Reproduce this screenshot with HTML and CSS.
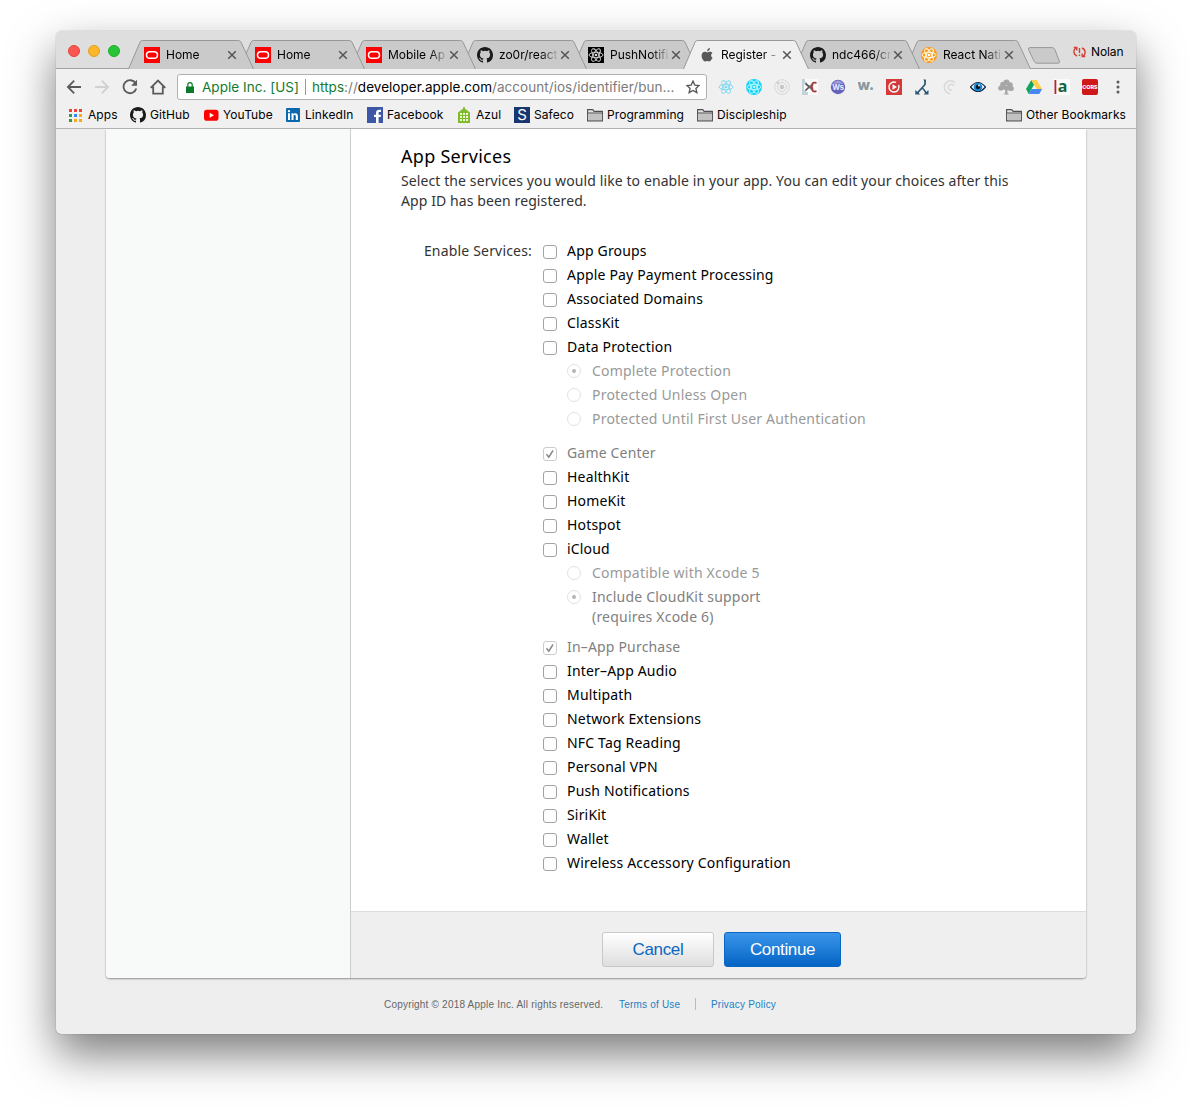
FILE: index.html
```html
<!DOCTYPE html>
<html lang="en">
<head>
<meta charset="utf-8">
<title>Register - iOS App IDs</title>
<link rel="stylesheet" href="styles.css">
</head>
<body>
<svg class="defs" aria-hidden="true">
  <symbol id="tab" viewBox="0 0 126 29"><path d="M.5 29 12 2.200Q12.800.5 14.500.5H110.500Q112.200.5 113 2.200L125.500 29"/></symbol>
  <symbol id="close" viewBox="0 0 10 10"><path d="M1.200 1.200 8.800 8.800M8.800 1.200 1.200 8.800" stroke="#555" stroke-width="1.500"/></symbol>
  <symbol id="oracle" viewBox="0 0 16 16"><path fill="#f00" d="M0 0h16v16H0z"/><rect x="2.500" y="4.700" width="11" height="6.600" rx="3.300" fill="none" stroke="#fff" stroke-width="1.500"/></symbol>
  <symbol id="github" viewBox="0 0 16 16"><path fill="#1b1b1b" d="M8 0C3.580 0 0 3.580 0 8c0 3.540 2.290 6.530 5.470 7.590.4.070.55-.17.55-.38 0-.19-.01-.82-.01-1.490-2.010.37-2.530-.49-2.690-.94-.09-.23-.48-.94-.82-1.130-.28-.15-.68-.52-.01-.53.63-.01 1.080.58 1.230.82.72 1.210 1.870.87 2.330.66.070-.52.28-.87.51-1.070-1.780-.2-3.640-.89-3.640-3.950 0-.87.31-1.590.82-2.150-.08-.2-.36-1.020.08-2.120 0 0 .67-.21 2.200.82a7.600 7.600 0 0 1 4 0c1.530-1.040 2.200-.82 2.200-.82.44 1.100.16 1.920.08 2.120.51.56.82 1.270.82 2.150 0 3.070-1.870 3.750-3.650 3.950.29.25.54.73.54 1.480 0 1.070-.01 1.930-.01 2.200 0 .21.15.46.55.38A8.010 8.010 0 0 0 16 8c0-4.420-3.580-8-8-8z"/></symbol>
  <symbol id="atom" viewBox="0 0 16 16"><g fill="none" stroke="currentColor" stroke-width=".9"><ellipse cx="8" cy="8" rx="7" ry="2.700"/><ellipse cx="8" cy="8" rx="7" ry="2.700" transform="rotate(60 8 8)"/><ellipse cx="8" cy="8" rx="7" ry="2.700" transform="rotate(120 8 8)"/></g><circle cx="8" cy="8" r="1.300" fill="currentColor"/></symbol>
  <symbol id="folder" viewBox="0 0 16 14"><path d="M.6 12.900V1.600h5.200l1.300 1.800h8.300v9.500H.6z" fill="#e4e4e4" stroke="#505050" stroke-width="1.100"/><path d="M1.500 5.500h13.200v6.700H1.500z" fill="#c2c2c2"/><path d="M.6 5h14.800" stroke="#505050"/></symbol>
</svg>

<div class="window">
  <header class="chrome">
    <div class="tabstrip">
      <div class="lights"><i class="red"></i><i class="yellow"></i><i class="green"></i></div>
      <div class="tabs">
        <div class="tab t1"><svg class="shape"><use href="#tab"/></svg><div class="tab-in"><svg class="fav"><use href="#oracle"/></svg><span class="title">Home</span><svg class="x"><use href="#close"/></svg></div></div>
        <div class="tab t2"><svg class="shape"><use href="#tab"/></svg><div class="tab-in"><svg class="fav"><use href="#oracle"/></svg><span class="title">Home</span><svg class="x"><use href="#close"/></svg></div></div>
        <div class="tab t3"><svg class="shape"><use href="#tab"/></svg><div class="tab-in"><svg class="fav"><use href="#oracle"/></svg><span class="title">Mobile Ap</span><svg class="x"><use href="#close"/></svg></div></div>
        <div class="tab t4"><svg class="shape"><use href="#tab"/></svg><div class="tab-in"><svg class="fav"><use href="#github"/></svg><span class="title">zo0r/react</span><svg class="x"><use href="#close"/></svg></div></div>
        <div class="tab t5"><svg class="shape"><use href="#tab"/></svg><div class="tab-in"><svg class="fav dark"><use href="#atom"/></svg><span class="title">PushNotifi</span><svg class="x"><use href="#close"/></svg></div></div>
        <div class="tab active"><svg class="shape"><use href="#tab"/></svg><div class="tab-in"><svg class="fav" viewBox="0 0 16 16"><path fill="#585858" d="M10.900 1c.1 1.700-1.300 3.200-2.700 3.200C8 2.700 9.400 1.200 10.900 1zM13 11.600c-.7 1.500-1.600 2.800-2.600 2.800-.9 0-1.100-.5-2.100-.5s-1.400.5-2.200.5c-1.600 0-3.500-3.100-3.500-5.700 0-2.500 1.600-3.900 3.200-3.900 1.100 0 1.800.6 2.500.6.7 0 1.600-.7 2.900-.6.700 0 1.700.4 2.300 1.300-2 1.200-1.700 4.300.5 5z"/></svg><span class="title">Register -</span><svg class="x"><use href="#close"/></svg></div></div>
        <div class="tab t7"><svg class="shape"><use href="#tab"/></svg><div class="tab-in"><svg class="fav"><use href="#github"/></svg><span class="title">ndc466/cr</span><svg class="x"><use href="#close"/></svg></div></div>
        <div class="tab t8"><svg class="shape"><use href="#tab"/></svg><div class="tab-in"><svg class="fav orange"><use href="#atom"/></svg><span class="title">React Nati</span><svg class="x"><use href="#close"/></svg></div></div>
      </div>
      <svg class="newtab" viewBox="0 0 34 17"><path d="M3 .6h22q2 0 2.800 1.800l4.600 11.800q.7 2-1.200 2H10q-2 0-2.800-1.800L1.500 2.600Q.9.6 3 .6z" fill="#cacaca" stroke="#989898"/></svg>
      <div class="profile"><svg width="13" height="12" viewBox="0 0 13 12"><g fill="none" stroke="#d23f31" stroke-width="1.400"><path d="M4 10C0 8.500.2 3.500 2.800 2M.8 1.500h3v3M9 2c4 1.500 3.800 6.500 1.200 8M12.200 10.500h-3v-3M6.500 2v5M6.500 8.500V10"/></g></svg><span>Nolan</span></div>
    </div>

    <div class="toolbar">
      <div class="nav">
        <svg viewBox="0 0 16 16"><path d="M15 8H2M8.200 1.700 1.900 8l6.300 6.300" stroke="#5a5a5a"/></svg>
        <svg viewBox="0 0 16 16"><path d="M1 8h13M7.800 1.700 14.100 8l-6.300 6.300" stroke="#d0d0d0"/></svg>
        <svg viewBox="0 0 16 16"><path d="M13.600 4.300A6.500 6.500 0 1 0 14.300 9.500" stroke="#5a5a5a"/><path d="M15 .8v5.900H9.100z" fill="#5a5a5a" stroke="none"/></svg>
        <svg viewBox="0 0 16 16"><path d="M.7 8.800 8 1.500l7.300 7.300M3.200 7.500v7.200h9.600V7.500" stroke="#5a5a5a"/></svg>
      </div>
      <div class="omnibox">
        <svg class="lock" viewBox="0 0 8 11"><path fill="#0b7a2b" d="M0 4.500h8V11H0z"/><path d="M1.800 5V2.800a2.200 2.200 0 0 1 4.400 0V5" fill="none" stroke="#0b7a2b" stroke-width="1.200"/></svg>
        <span class="org">Apple Inc. [US]</span><i class="sep"></i><span class="url"><b>https</b>://<em>developer.apple.com</em>/account/ios/identifier/bun...</span>
        <svg class="star" viewBox="0 0 14 14"><path d="m7 1.100 1.800 4 4.300.4-3.200 2.900 1 4.200L7 10.400l-3.900 2.200 1-4.200L.9 5.500l4.300-.4z" fill="none" stroke="#555" stroke-width="1.300"/></svg>
      </div>
      <div class="extensions">
        <svg viewBox="0 0 16 16" color="#79d7f2"><use href="#atom"/></svg>
        <svg viewBox="0 0 16 16" color="#c8f8ff"><circle cx="8" cy="8" r="8" fill="#12d4f5"/><use href="#atom"/></svg>
        <svg viewBox="0 0 16 16"><g fill="none" stroke="#d6d6d6"><circle cx="8" cy="8" r="7.300"/><circle cx="8" cy="8" r="4.500"/></g><circle cx="8" cy="8" r="2.300" fill="#c8c8c8"/><circle cx="3.800" cy="3.800" r="1.300" fill="#ccc"/></svg>
        <svg viewBox="0 0 16 16"><path fill="#fafafa" d="M2 0h14v16H2z"/><path fill="#c3d2da" d="M0 0h3v3h2v2H2v6h2v2h2v3H0z"/><path d="m3.500 4.500 3.800 3.300-3.800 3.700" fill="none" stroke="#555" stroke-width="1.700"/><path d="m7.200 7.800 3-2.500M7.200 7.800l3 3" stroke="#777" stroke-width="1.700"/><path d="M14.500 3.800c-3-.6-4.500.2-4 2 .2 1-.2 1.600-1.500 2.200 1.300.6 1.700 1.200 1.500 2.200-.5 1.800 1 2.800 4 2" fill="none" stroke="#9a3c3c" stroke-width="1.800"/></svg>
        <svg viewBox="0 0 16 16"><circle cx="8" cy="8" r="7.200" fill="#6463bb"/><path d="M2.500 5.300Q8-2.500 13.500 5.300 8 3.500 2.500 5.300" fill="#9f9fdc"/><text x="8" y="10.800" text-anchor="middle" font-size="7.500" font-weight="700" fill="#eef">Ws</text></svg>
        <svg viewBox="0 0 16 16"><text x="-.5" y="10.800" font-size="14.500" font-weight="800" fill="#87989f">w.</text></svg>
        <svg viewBox="0 0 16 16"><path fill="#d53a3a" d="M0 0h16v16H0z"/><path d="M10 3.400a5 5 0 1 0 2.600 2.700" fill="none" stroke="#fff" stroke-width="1.400"/><path d="M6.500 5.200 11 8l-4.500 2.800z" fill="#fff"/></svg>
        <svg viewBox="0 0 16 16"><path d="M11 1v4.500Q8 9 3.500 13.800M7.800 8.500Q10.500 11 12 14" fill="none" stroke="#2c5873" stroke-width="1.700"/><path d="M9.300.5h2.500v3zM1.300 11l5 4.500H1.300zM14.500 11v4.500h-5z" fill="#2c5873"/></svg>
        <svg viewBox="0 0 16 16"><g fill="none" stroke="#d8d8d8" stroke-width="1.500"><path d="M13 3.500C9 0 3 2 2.300 8c0 4 3 6.500 6 6.700"/><path d="M11.800 7C10.500 4 6.500 5 6.300 8c0 2.500 2 3.500 4 3"/></g></svg>
        <svg viewBox="0 0 16 16"><path d="M.5 8Q8-1 15.500 8 8 17 .5 8z" fill="#f4faff" stroke="#14253c" stroke-width="1.200"/><circle cx="8" cy="8" r="4.300" fill="#1688d4"/><circle cx="8" cy="8" r="2.200" fill="#06121e"/><circle cx="9" cy="6.500" r=".9" fill="#fff"/></svg>
        <svg viewBox="0 0 16 16" fill="#a6a6a6"><circle cx="2.800" cy="9" r="2.600"/><circle cx="5" cy="5.500" r="2.800"/><circle cx="8.500" cy="3.500" r="3"/><circle cx="12" cy="6" r="2.800"/><circle cx="13.300" cy="9.500" r="2.500"/><path d="M3 7h10v4.500H9.200l.4 2.500 1.400 1.500H5.500L7 14l.2-3L3 10z"/></svg>
        <svg viewBox="0 0 16 16"><path fill="#11a45d" d="M5.300 1 0 10l2.700 5L8 5.700z"/><path fill="#ffcf48" d="M5.300 1h5.400L16 10h-5.300z"/><path fill="#4687f4" d="M5.500 10H16l-2.700 5H2.700z"/></svg>
        <svg viewBox="0 0 16 16"><path fill="#fafafa" d="M0 0h16v16H0z"/><path d="M1.400 1v14" stroke="#b3262c" stroke-width="1.800"/><text class="sans" x="3.800" y="13" font-size="16" font-weight="700" fill="#17653e">a</text></svg>
        <svg viewBox="0 0 16 16"><rect width="16" height="16" rx="2" fill="#d01818"/><text x="8" y="10.300" text-anchor="middle" font-size="5.400" font-weight="800" fill="#fff">CORS</text></svg>
        <svg viewBox="0 0 16 16" fill="#5a5a5a"><circle cx="8" cy="3" r="1.500"/><circle cx="8" cy="8" r="1.500"/><circle cx="8" cy="13" r="1.500"/></svg>
      </div>
    </div>

    <nav class="bookmarks">
      <a class="bm1"><svg viewBox="0 0 16 16"><path fill="#e9453a" d="M1 2h3v3H1zM6 2h3v3H6zM11 2h3v3h-3z"/><path fill="#2d9a50" d="M1 7h3v3H1zM1 12h3v3H1z"/><path fill="#4285f4" d="M6 7h3v3H6z"/><path fill="#f5ab15" d="M11 7h3v3h-3zM6 12h3v3H6zM11 12h3v3h-3z"/></svg><span>Apps</span></a>
      <a class="bm2"><svg><use href="#github"/></svg><span>GitHub</span></a>
      <a class="bm3"><svg viewBox="0 0 16 16"><rect x="1" y="2.700" width="14.500" height="11" rx="2.800" fill="#f00"/><path d="M6.700 5.700v5l4.300-2.500z" fill="#fff"/></svg><span>YouTube</span></a>
      <a class="bm4"><svg viewBox="0 0 16 16"><rect x="1" y="1" width="14" height="14" rx="1" fill="#0c68ae"/><path d="M3 6.300h2V13H3zM6.500 6.300h2V13h-2zM8.500 9c0-1.500 2.300-1.500 2.300.2V13h2.100V9c0-3.500-3.500-3.500-4.400-1.500z" fill="#fff"/><circle cx="4" cy="4.100" r="1.200" fill="#fff"/></svg><span>LinkedIn</span></a>
      <a class="bm5"><svg viewBox="0 0 16 16"><path fill="#3b57a5" d="M0 0h16v16H0z"/><path d="M9 16v-6H7V7.700h2V6c0-2.400 1.300-3.300 3.200-3.300H14V5h-1.200c-1 0-1.200.4-1.200 1.200v1.500H14l-.3 2.300h-2.100v6z" fill="#fff"/></svg><span>Facebook</span></a>
      <a class="bm6"><svg viewBox="0 0 16 16"><path fill="#80bc2a" d="M7.200 0h1.600v1.500L14 5.600V16H2V5.600l5.200-4.100z"/><path d="M4 6h2v2H4zm3 0h2v2H7zm3 0h2v2h-2zM4 9h2v2H4zm3 0h2v2H7zm3 0h2v2h-2zM4 12h2v2H4zm3 0h2v2H7zm3 0h2v2h-2z" fill="#e9f6d8"/></svg><span>Azul</span></a>
      <a class="bm7"><svg viewBox="0 0 16 16"><path fill="#18376f" d="M0 0h16v16H0z"/><text x="8" y="13.300" text-anchor="middle" font-size="15" fill="#fff">S</text></svg><span>Safeco</span></a>
      <a class="bm8"><svg><use href="#folder"/></svg><span>Programming</span></a>
      <a class="bm9"><svg><use href="#folder"/></svg><span>Discipleship</span></a>
      <a class="other"><svg><use href="#folder"/></svg><span>Other Bookmarks</span></a>
    </nav>
  </header>

  <div class="page">
    <div class="panel">
      <aside></aside>
      <main>
        <section class="services">
          <h2>App Services</h2>
          <p class="intro">Select the services you would like to enable in your app. You can edit your choices after this<br>App ID has been registered.</p>
          <div class="form">
            <div class="label">Enable Services:</div>
            <ul>
              <li><i class="box"></i><span>App Groups</span></li>
              <li><i class="box"></i><span>Apple Pay Payment Processing</span></li>
              <li><i class="box"></i><span>Associated Domains</span></li>
              <li><i class="box"></i><span>ClassKit</span></li>
              <li><i class="box"></i><span>Data Protection</span></li>
              <li class="sub"><i class="radio on"></i><span>Complete Protection</span></li>
              <li class="sub"><i class="radio"></i><span>Protected Unless Open</span></li>
              <li class="sub gap"><i class="radio"></i><span>Protected Until First User Authentication</span></li>
              <li class="off"><i class="box"><svg viewBox="0 0 12 12"><path d="m2.500 6.200 2.300 2.900L9 2.500"/></svg></i><span>Game Center</span></li>
              <li><i class="box"></i><span>HealthKit</span></li>
              <li><i class="box"></i><span>HomeKit</span></li>
              <li><i class="box"></i><span>Hotspot</span></li>
              <li><i class="box"></i><span>iCloud</span></li>
              <li class="sub"><i class="radio"></i><span>Compatible with Xcode 5</span></li>
              <li class="sub two"><i class="radio on"></i><span>Include CloudKit support<br>(requires Xcode 6)</span></li>
              <li class="off"><i class="box"><svg viewBox="0 0 12 12"><path d="m2.500 6.200 2.300 2.900L9 2.500"/></svg></i><span>In–App Purchase</span></li>
              <li><i class="box"></i><span>Inter–App Audio</span></li>
              <li><i class="box"></i><span>Multipath</span></li>
              <li><i class="box"></i><span>Network Extensions</span></li>
              <li><i class="box"></i><span>NFC Tag Reading</span></li>
              <li><i class="box"></i><span>Personal VPN</span></li>
              <li><i class="box"></i><span>Push Notifications</span></li>
              <li><i class="box"></i><span>SiriKit</span></li>
              <li><i class="box"></i><span>Wallet</span></li>
              <li><i class="box"></i><span>Wireless Accessory Configuration</span></li>
            </ul>
          </div>
        </section>
        <div class="actions"><button class="cancel">Cancel</button><button class="continue">Continue</button></div>
      </main>
    </div>
    <footer><span class="copy">Copyright © 2018 Apple Inc. All rights reserved.</span><a class="terms">Terms of Use</a><i></i><a class="privacy">Privacy Policy</a></footer>
  </div>
</div>
</body>
</html>
```
FILE: styles.css
```css
* { box-sizing: border-box; }
body { margin: 0; height: 1114px; padding: 31px 56px 80px; background: #fff; font-family: Inter, sans-serif; overflow: hidden; }
svg { display: block; flex: none; }
.defs { position: absolute; width: 0; height: 0; }
.window { width: 1080px; height: 1003px; border-radius: 6px 6px 5px 5px; background: #eee; display: flex; flex-direction: column; box-shadow: 0 0 1px rgba(0,0,0,.5), 0 20px 45px rgba(0,0,0,.52); }

/* tab strip */
.chrome { height: 98px; border-bottom: 1px solid #b4b4b4; background: #f0f0f0; border-radius: 6px 6px 0 0; font-size: 12px; }
.tabstrip { height: 38px; background: #dedede; border-bottom: 1px solid #a3a3a3; border-radius: 6px 6px 0 0; display: flex; align-items: flex-start; }
.lights { display: flex; gap: 8px; padding: 14px 0 0 12px; width: 72px; }
.lights i { width: 12px; height: 12px; border-radius: 50%; border: 1px solid; flex: none; }
.lights .red { background: #fc5650; border-color: #e0443e; }
.lights .yellow { background: #fdb52b; border-color: #dfa023; }
.lights .green { background: #27c536; border-color: #1dad2b; }
.tabs { display: flex; padding-top: 9px; }
.tab { width: 126px; height: 29px; margin-right: -15px; display: grid; position: relative; flex: none; }
.tab > * { grid-area: 1 / 1; }
.shape { width: 126px; height: 29px; fill: #cacaca; stroke: #989898; }
.t1 { z-index: 8; } .t2 { z-index: 7; } .t3 { z-index: 6; } .t4 { z-index: 5; } .t5 { z-index: 4; } .t7 { z-index: 3; } .t8 { z-index: 2; }
.active { z-index: 9; }
.active .shape { fill: #f0f0f0; }
.tab-in { display: flex; align-items: center; padding: 1px 0 0 16px; }
.fav { width: 16px; height: 16px; }
.dark { background: #000; color: #ddd; }
.orange { background: #f99d1c; border-radius: 50%; color: #fff; }
.title { width: 61px; margin-left: 6px; padding-bottom: 2px; white-space: nowrap; letter-spacing: -.02px; -webkit-mask-image: linear-gradient(90deg, #000 42px, transparent 60px); mask-image: linear-gradient(90deg, #000 42px, transparent 60px); }
.x { width: 10px; height: 10px; }
.newtab { width: 34px; height: 17px; margin: 16px 0 0 11px; }
.profile { margin: 13px 0 0 12px; display: flex; align-items: center; gap: 5px; line-height: 15px; letter-spacing: -.1px; }

/* toolbar */
.toolbar { height: 36px; display: flex; align-items: center; padding-left: 10px; }
.nav { display: flex; gap: 12px; width: 111px; }
.nav svg { width: 16px; height: 16px; fill: none; stroke-width: 1.800; }
.omnibox { width: 530px; height: 26px; background: #fff; border: 1px solid #b0b0b0; border-radius: 3px; display: flex; align-items: center; padding-left: 8px; font-size: 13.500px; letter-spacing: .04px; white-space: nowrap; }
.lock { width: 8px; height: 11px; }
.org { color: #127a30; margin-left: 8px; width: 103px; }
.sep { width: 1px; height: 16px; background: #999; }
.url { color: #7b7b7b; width: 380px; padding-left: 6px; }
.url b { font-weight: 400; color: #127a30; }
.url em { font-style: normal; color: #000; }
.star { width: 14px; height: 14px; }
.extensions { display: flex; gap: 12px; margin-left: 11px; }
.extensions svg { width: 16px; height: 16px; }
.sans { font-family: "Noto Sans", sans-serif; }

/* bookmarks */
.bookmarks { display: flex; height: 20px; padding-left: 12px; letter-spacing: .08px; }
.bookmarks a { display: flex; align-items: center; gap: 4px; white-space: nowrap; }
.bookmarks svg { width: 16px; height: 16px; }
.bookmarks span { padding-bottom: 2px; }
.bm1 { width: 62px; } .bm2 { width: 73px; } .bm3 { width: 82px; } .bm4 { width: 82px; } .bm5 { width: 89px; } .bm6 { width: 58px; } .bm7 { width: 73px; } .bm8 { width: 110px; } .bm9 { width: 309px; }

/* page */
.page { flex: 1; padding: 0 50px; }
.panel { height: 849px; display: flex; background: #fff; border-radius: 0 0 4px 4px; box-shadow: 0 1px 2px rgba(0,0,0,.4); overflow: hidden; }
aside { width: 245px; background: #f8faf9; border-right: 1px solid #ccc; }
main { flex: 1; display: flex; flex-direction: column; font-family: "Noto Sans", sans-serif; font-size: 14px; }
.services { flex: 1; padding: 14px 0 0 50px; }
h2 { margin: 0; font-size: 18px; font-weight: 400; line-height: 26px; letter-spacing: .28px; }
.intro { margin: 2px 0 0; line-height: 20px; color: #333; white-space: nowrap; letter-spacing: .1px; }
.form { display: flex; margin-top: 28px; letter-spacing: .18px; }
.label { width: 131px; text-align: right; line-height: 24px; color: #333; }
ul { list-style: none; margin: 0 0 0 11px; padding: 0; }
li { height: 24px; display: flex; line-height: 24px; white-space: nowrap; }
.box { width: 14px; height: 14px; margin: 6px 10px 0 0; border: 1px solid #a3a3a3; border-radius: 3px; flex: none; }
.box svg { width: 12px; height: 12px; fill: none; stroke: #888; stroke-width: 1.500; }
.off { color: #808080; }
.off .box { border-color: #ccc; }
.sub { padding-left: 24px; color: #999; letter-spacing: .21px; }
.gap { height: 34px; }
.radio { width: 14px; height: 14px; margin: 5px 11px 0 0; border: 1px solid #e2e2e2; border-radius: 50%; flex: none; display: grid; place-items: center; }
.on::after { content: ""; width: 4px; height: 4px; border-radius: 50%; background: #b4b4b4; }
.two { height: 50px; color: #808080; }
.two span { line-height: 20px; padding-top: 2px; }
.actions { height: 67px; background: #efefef; border-top: 1px solid #ddd; display: flex; gap: 10px; padding: 20px 0 0 251px; }
button { height: 35px; padding: 0; font: 17px "Liberation Sans", Arial, sans-serif; letter-spacing: -.35px; border-radius: 3px; }
.cancel { width: 112px; color: #0b67c4; background: linear-gradient(#fff, #dedede); border: 1px solid #c9c9c9; }
.continue { width: 117px; color: #fff; background: linear-gradient(#3b95ea, #0464c4); border: 1px solid #0867c2; }
footer { display: flex; align-items: center; margin: 19px 0 0 278px; height: 14px; font: 10px "Liberation Sans", Arial, sans-serif; letter-spacing: .2px; color: #666; white-space: nowrap; }
footer i { width: 1px; height: 12px; background: #bbb; }
footer a { color: #1a80c4; }
.copy { width: 235px; } .terms { width: 76px; } .privacy { margin-left: 15px; }
```
